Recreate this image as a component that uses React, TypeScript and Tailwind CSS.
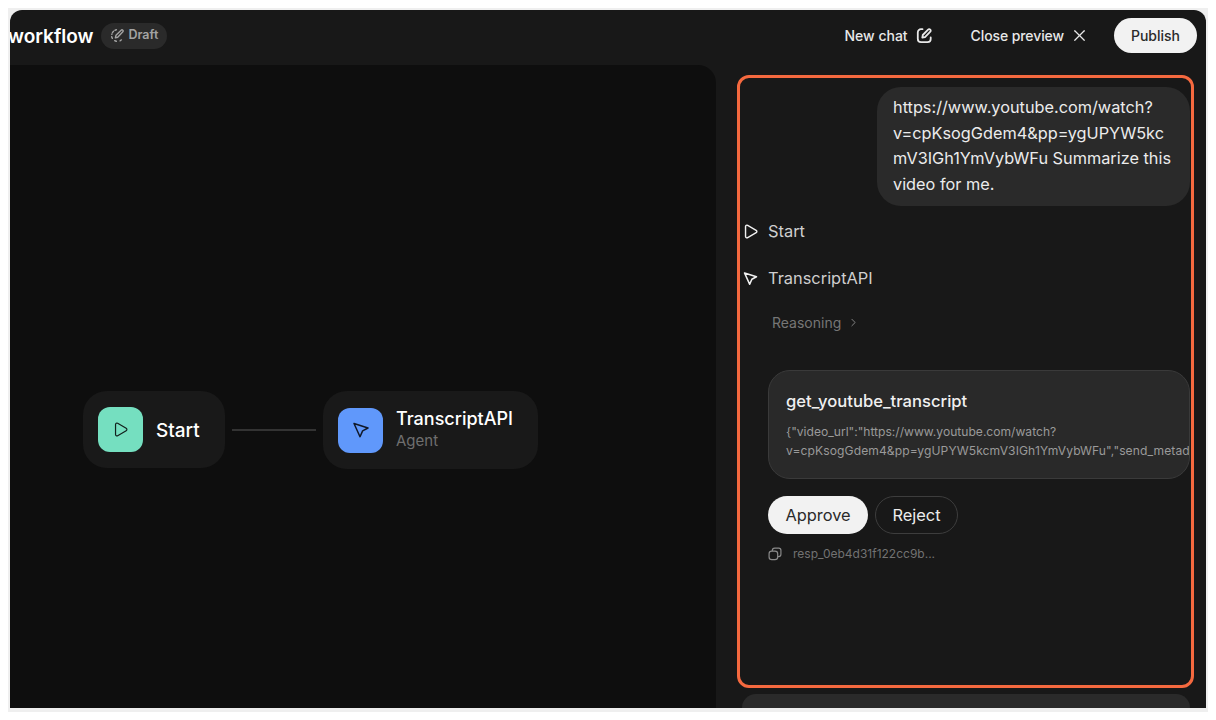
import { Play, X, ChevronRight } from 'lucide-react';

const FONT = "font-['Inter','Liberation_Sans',sans-serif]";

function PlayIcon({ size = 17, strokeWidth = 1.7, className = '' }: { size?: number; strokeWidth?: number; className?: string }) {
  return <Play size={size} strokeWidth={strokeWidth} className={className} />;
}

// cursor arrow, tip at upper left
function PointerIcon({ size = 20, strokeWidth = 1.2, className = '' }: { size?: number; strokeWidth?: number; className?: string }) {
  return (
    <svg width={size} height={size} viewBox="0 0 16 16" fill="none" stroke="currentColor" strokeWidth={strokeWidth} strokeLinejoin="round" className={className}>
      <path d="M2.4 2.800 13.600 6.400 9.300 8.700 7.200 13.400Z" />
    </svg>
  );
}

function DraftIcon() {
  return (
    <svg width="15" height="15" viewBox="0 0 14 14" fill="none" stroke="currentColor" strokeWidth="1.300" strokeLinecap="round" strokeLinejoin="round">
      <path d="M6 1.600A5.400 5.400 0 0 0 1.700 6M1.600 8.200c.2.800.6 1.600 1.200 2.200M4.400 11.800c.8.500 1.700.7 2.600.7M9.400 12c.8-.4 1.500-1 2-1.800" strokeDasharray="1.600 1.400" />
      <path d="M5 9.200 5.600 6.800 10.400 2a1.100 1.100 0 0 1 1.600 1.600L7.200 8.600Z" />
    </svg>
  );
}

function NewChatIcon() {
  return (
    <svg width="17" height="17" viewBox="0 0 17 17" fill="none" stroke="currentColor" strokeWidth="1.800" strokeLinecap="round" strokeLinejoin="round">
      <path d="M6.500 2.200H5A3.200 3.200 0 0 0 1.800 5.400V12A3.200 3.200 0 0 0 5 15.200h6.500a3.200 3.200 0 0 0 3.200-3.200v-1.500" />
      <path d="M6.300 10.700 6.800 8l5.300-5.400a1.500 1.500 0 0 1 2.200 2.100L9 10.200Z" />
    </svg>
  );
}

function CopyIcon() {
  return (
    <svg width="14" height="14" viewBox="0 0 13 13" fill="none" stroke="currentColor" strokeWidth="1.100" strokeLinejoin="round">
      <rect x="1" y="3.800" width="8" height="8" rx="2.500" />
      <path d="M4 3.800V3.200A2.200 2.200 0 0 1 6.200 1H10A2 2 0 0 1 12 3v3.800A2.200 2.200 0 0 1 9.800 9H9" />
    </svg>
  );
}

function Header() {
  return (
    <div className="h-[55px] shrink-0 flex items-center justify-between pr-[9px] pb-[4px] overflow-hidden">
      <div className="flex items-center gap-2">
        <span className="text-[19px] font-semibold text-white -ml-[2px] mt-[3px]">workflow</span>
        <span className="flex items-center gap-[3px] h-[26px] px-[9px] rounded-full bg-[#2a2a2a] text-[12.500px] font-semibold text-[#a3a3a3]">
          <DraftIcon />
          Draft
        </span>
      </div>
      <div className="flex items-center text-[14px] font-medium text-[#e8e8e8]">
        <button className="flex items-center gap-2">
          New chat <NewChatIcon />
        </button>
        <button className="flex items-center gap-[6px] ml-[38px] tracking-[-0.1px]">
          Close preview <X size={19} strokeWidth={1.500} />
        </button>
        <button className="ml-[25px] h-[35px] w-[83px] rounded-full bg-[#f2f2f2] text-[#2a2a2a]">Publish</button>
      </div>
    </div>
  );
}

function Canvas() {
  return (
    <div className="relative w-[706px] shrink-0 rounded-tr-[18px] bg-[#0e0e0e]">
      <div className="absolute left-[73px] top-[326px] h-[77px] w-[142px] flex items-center gap-[13px] pl-[15px] rounded-[24px] bg-[#191919]">
        <div className="w-[45px] h-[45px] rounded-[12px] bg-[#75dfc0] flex items-center justify-center text-[#12201c]">
          <PlayIcon />
        </div>
        <span className="text-[19px] font-medium text-white mt-[3px]">Start</span>
      </div>
      <div className="absolute left-[222px] top-[364px] h-[2px] w-[84px] bg-[#333333]" />
      <div className="absolute left-[313px] top-[326px] h-[78px] w-[215px] flex items-center gap-[13px] pl-[15px] rounded-[24px] bg-[#191919]">
        <div className="w-[45px] h-[45px] rounded-[12px] bg-[#6098fb] flex items-center justify-center text-[#101828]">
          <PointerIcon />
        </div>
        <div className="flex flex-col mb-[3px]">
          <span className="text-[18px] leading-[25px] font-medium text-white">TranscriptAPI</span>
          <span className="text-[15px] leading-[20px] text-[#6f6f6f]">Agent</span>
        </div>
      </div>
    </div>
  );
}

function Conversation() {
  return (
    <div className="flex-1 min-w-0 flex flex-col pl-[26px] pr-[16px] overflow-hidden">
      <div className="flex-1 min-h-0 overflow-hidden pt-[22px]">
        <div className="ml-auto w-[313px] h-[119px] rounded-[24px] bg-[#2a2a2a] pl-[16px] pr-[14px] py-[8px] text-[16.300px] leading-[25.500px] text-[#ececec] break-words">
          https://www.youtube.com/watch?v=cpKsogGdem4&amp;pp=ygUPYW5kcmV3IGh1YmVybWFu Summarize this video for me.
        </div>
        <div className="flex items-center mt-[15px] h-[20px] text-[16.400px] text-[#cfcfcf]">
          <PlayIcon strokeWidth={2} className="text-[#f0f0f0] mr-[9px]" />
          Start
        </div>
        <div className="flex items-center mt-[27px] h-[20px] text-[16.400px] text-[#cfcfcf]">
          <PointerIcon size={17} strokeWidth={1.500} className="text-[#f0f0f0] mr-[9px]" />
          TranscriptAPI
        </div>
        <div className="flex items-center gap-[6px] mt-[24px] ml-[30px] h-[20px] text-[14px] text-[#767676]">
          Reasoning <ChevronRight size={13} strokeWidth={1.500} className="text-[#999999]" />
        </div>
        <div className="mt-[38px] ml-[26px] h-[109px] rounded-[22px] border border-[#3a3a3a] bg-[#292929] pl-[17px] pt-[18px] overflow-hidden">
          <div className="text-[16.600px] leading-[24px] font-medium text-[#f0f0f0]">get_youtube_transcript</div>
          <div className="mt-[10px] text-[12.100px] leading-[18.500px] text-[#9a9a9a] whitespace-nowrap">
            {'{"video_url":"https://www.youtube.com/watch?'}
            <br />
            <span className="tracking-[0.09px]">{'v=cpKsogGdem4&pp=ygUPYW5kcmV3IGh1YmVybWFu","send_metad'}</span>
          </div>
        </div>
        <div className="flex items-center gap-[7px] mt-[17px] ml-[26px] text-[16.400px]">
          <button className="h-[38px] w-[100px] rounded-full bg-[#f2f2f2] text-[#2a2a2a]">Approve</button>
          <button className="h-[38px] w-[83px] rounded-full border border-[#3d3d3d] text-[#ececec]">Reject</button>
        </div>
        <div className="flex items-center gap-[11px] mt-[12px] ml-[26px] text-[12px] leading-[16px] text-[#727272]">
          <span className="text-[#8a8a8a]">
            <CopyIcon />
          </span>
          resp_0eb4d31f122cc9b...
        </div>
      </div>
      <div className="h-[14px] shrink-0 rounded-t-[24px] bg-[#2a2a2a]" />
    </div>
  );
}

export default function App() {
  return (
    <div className={`h-[720px] w-[1216px] bg-white ${FONT} antialiased`}>
      <div className="relative ml-[8px] w-[1200px] h-[712px] pl-[2px] pt-[10px] bg-[#efefef] [clip-path:inset(8px_0_0_0)]">
        <div className="h-[698px] w-[1196px] rounded-t-[12px] bg-[#181818] flex flex-col overflow-hidden">
          <Header />
          <div className="flex-1 min-h-0 flex">
            <Canvas />
            <Conversation />
          </div>
        </div>
        {/* highlight drawn over the chat column */}
        <div className="absolute left-[729px] top-[75px] w-[457px] h-[613px] rounded-[12px] border-[3px] border-[#f5693f] pointer-events-none" />
      </div>
    </div>
  );
}
